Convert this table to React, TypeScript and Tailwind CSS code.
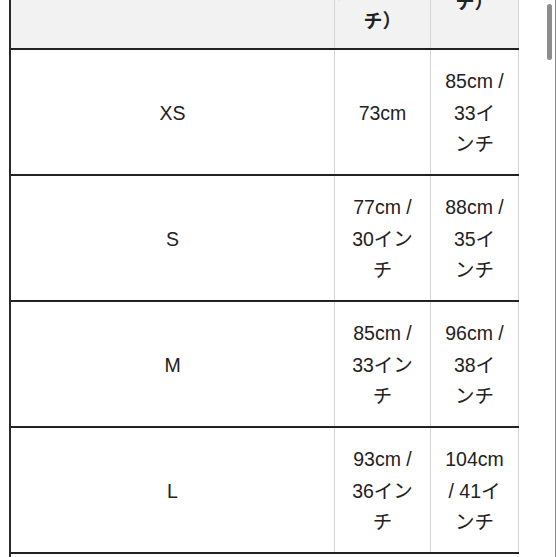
import React from 'react';

const rows: { size: string; waist: string[]; hip: string[] }[] = [
  { size: 'XS', waist: ['73cm'], hip: ['85cm /', '33イ', 'ンチ'] },
  { size: 'S', waist: ['77cm /', '30イン', 'チ'], hip: ['88cm /', '35イ', 'ンチ'] },
  { size: 'M', waist: ['85cm /', '33イン', 'チ'], hip: ['96cm /', '38イ', 'ンチ'] },
  { size: 'L', waist: ['93cm /', '36イン', 'チ'], hip: ['104cm', '/ 41イ', 'ンチ'] },
];

const font = { fontFamily: '"Liberation Sans", "Noto Sans CJK JP", sans-serif' };

const Lines: React.FC<{ lines: string[] }> = ({ lines }) => (
  <div className="flex flex-col items-center">
    {lines.map((l, i) => (
      <span key={i} className="leading-[31.5px] whitespace-nowrap">
        {l}
      </span>
    ))}
  </div>
);

export default function App() {
  return (
    <div className="relative w-[557px] h-[557px] overflow-hidden bg-white flex text-[#222]" style={font}>
      <div className="ml-[9px] w-[510px] border-l-2 border-[#2a2a2a] flex flex-col">
        {/* header, scrolled so only the tail of the labels shows */}
        <div className="grid grid-cols-[324px_96px_88px] h-[50px] shrink-0 bg-[#f2f2f2] border-b-2 border-[#222] font-bold text-[19px]">
          <div className="border-r border-[#d4d4d4]"></div>
          <div className="border-r border-[#d4d4d4] overflow-hidden flex flex-col justify-end items-center pb-[12px] leading-[28px]">
            <span>ウエスト</span>
            <span>（cm / イン</span>
            <span>チ）</span>
          </div>
          <div className="border-r border-[#d4d4d4] overflow-hidden flex flex-col justify-end items-center pb-[31px] leading-[28px]">
            <span>ヒップ</span>
            <span>（cm / イン</span>
            <span>チ）</span>
          </div>
        </div>

        {rows.map((r) => (
          <div
            key={r.size}
            className="grid grid-cols-[324px_96px_88px] h-[126px] shrink-0 border-b-2 border-[#222] text-[19.5px]"
          >
            <div className="border-r border-[#d4d4d4] flex items-center justify-center pt-[3px]">{r.size}</div>
            <div className="border-r border-[#d4d4d4] flex items-center justify-center pt-[3px]">
              <Lines lines={r.waist} />
            </div>
            <div className="border-r border-[#d4d4d4] flex items-center justify-center pt-[3px]">
              <Lines lines={r.hip} />
            </div>
          </div>
        ))}
      </div>

      <div className="flex-1"></div>
      <div className="w-px h-full bg-[#8a8a8a] mr-[1px]"></div>

      {/* scrollbar thumb */}
      <div className="absolute left-[547px] top-[4px] w-[5px] h-[56px] rounded-full bg-[#8c8c8c]"></div>
    </div>
  );
}
